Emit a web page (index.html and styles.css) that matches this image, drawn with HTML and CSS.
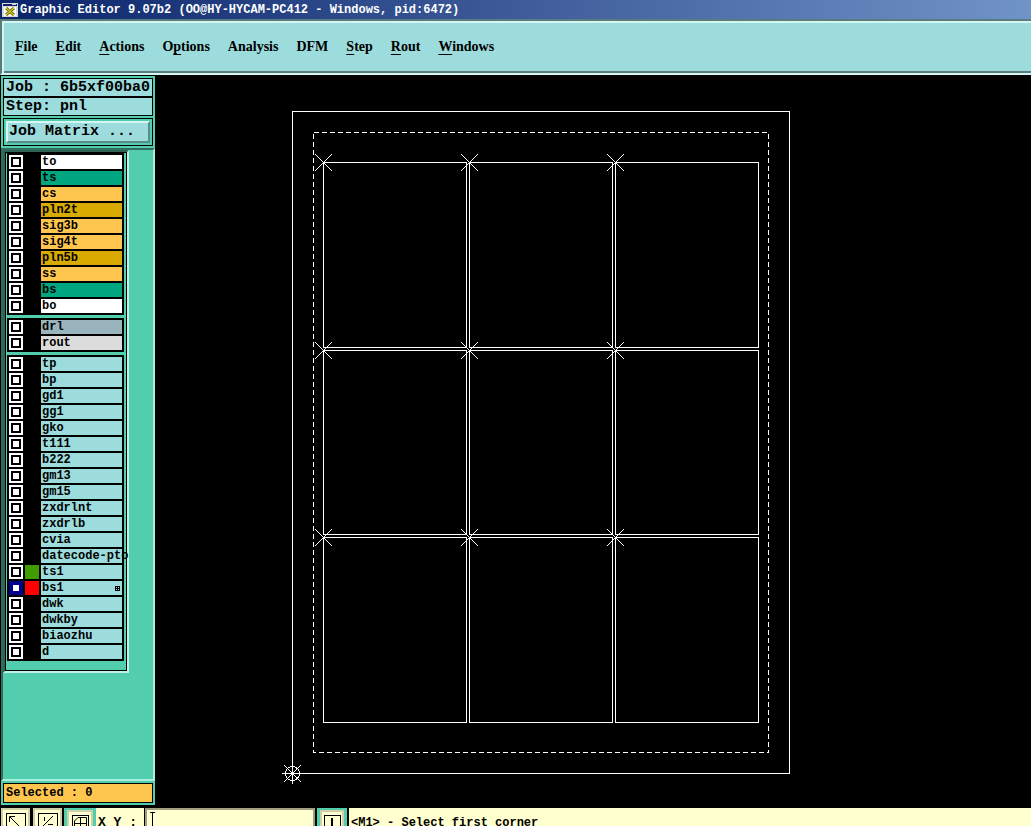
FILE: index.html
```
<!DOCTYPE html>
<html lang="en">
<head>
  <meta charset="UTF-8">
  <title>Graphic Editor 9.07b2</title>
  <link rel="stylesheet" href="styles.css">
</head>
<body>

<header class="titlebar">
  <svg class="app-icon" width="16" height="14" viewBox="0 0 16 14">
    <rect width="16" height="14" fill="#d8d8d8"/>
    <rect x="1" y="1" width="14" height="2" fill="#14206e"/>
    <rect x="10" y="1" width="4" height="1" fill="#d8d8d8"/>
    <rect x="2" y="4" width="12" height="9" fill="#fff"/>
    <path d="M4 5L12 12M12 5L4 12" stroke="#7c7c10" stroke-width="3"/>
    <path d="M4 5L12 12M12 5L4 12" stroke="#e6e020"/>
  </svg>
  <span>Graphic Editor 9.07b2 (OO@HY-HYCAM-PC412 - Windows, pid:6472)</span>
</header>

<nav class="menubar">
  <button><u>F</u>ile</button>
  <button><u>E</u>dit</button>
  <button><u>A</u>ctions</button>
  <button>O<u>p</u>tions</button>
  <button>Analysis</button>
  <button>DFM</button>
  <button><u>S</u>tep</button>
  <button><u>R</u>out</button>
  <button><u>W</u>indows</button>
</nav>

<main class="workspace">
  <aside class="sidebar">
    <div class="job">
      <div>Job : 6b5xf00ba0</div>
      <div>Step: pnl</div>
    </div>
    <div class="matrix"><button>Job Matrix ...</button></div>
    <div class="layers">
      <div class="frame" id="layers"></div>
    </div>
    <div class="selected">Selected : 0</div>
  </aside>

  <section class="canvas">
    <svg id="panel" width="876" height="732" viewBox="155 75 876 732" fill="none" stroke="#fff" shape-rendering="crispEdges">
      <rect x="292.5" y="111.5" width="497" height="662"/>
      <rect x="313.5" y="132.5" width="455" height="620" stroke-dasharray="5 3"/>
      <g id="steps"></g>
      <!-- datum -->
      <circle cx="292.5" cy="773.5" r="7"/>
      <path d="M282 773.5H303M292.5 764V784M284 765L301 782M301 765L284 782"/>
    </svg>
  </section>
</main>

<footer class="toolbar">
  <button class="tool" aria-label="Zoom area">
    <svg width="20" height="20" viewBox="0 0 20 20" fill="none" stroke="#000">
      <rect x=".5" y=".5" width="19" height="19"/>
      <path d="M4 4L16 16M3.5 9V3.5H9"/>
    </svg>
  </button>
  <button class="tool" aria-label="Snap">
    <svg width="20" height="20" viewBox="0 0 20 20" fill="none" stroke="#000">
      <rect x=".5" y=".5" width="19" height="19"/>
      <path d="M15 3L4 14M6.5 4V8M10 11.5H15"/>
    </svg>
  </button>
  <button class="tool on" aria-label="Grid">
    <svg width="17" height="20" viewBox="0 0 17 20" fill="none" stroke="#000">
      <rect x=".5" y=".5" width="16" height="19"/>
      <path d="M2.5 15V6L6 2.5H14.5V15M8.5 2V16M2 8.5H15"/>
    </svg>
  </button>
  <label class="xy" for="xy">X Y :</label>
  <div class="coords">
    <input id="xy" type="text">
    <svg class="caret" width="5" height="16" viewBox="0 0 5 16" fill="none" stroke="#000" shape-rendering="crispEdges">
      <path d="M0 .5H5M2.5 0V16"/>
    </svg>
  </div>
  <button class="tool on info" aria-label="Info">
    <svg width="17" height="20" viewBox="0 0 17 20" fill="none" stroke="#000">
      <rect x=".5" y=".5" width="16" height="19"/>
      <path d="M8 3V16" stroke-width="2"/>
    </svg>
  </button>
  <span class="status">&lt;M1&gt; - Select first corner</span>
</footer>

<script src="script.js"></script>
</body>
</html>
```
FILE: styles.css
```
* {
  box-sizing: border-box;
}
body {
  margin: 0;
  height: 100vh;
  display: flex;
  flex-direction: column;
  overflow: hidden;
  background: #000;
  color: #000;
  font: bold 12px/14px "Liberation Mono", monospace;
}
button, input {
  margin: 0;
  padding: 0;
  border: 0;
  border-radius: 0;
  background: none;
  font: inherit;
  color: inherit;
}
.titlebar {
  flex: none;
  height: 19px;
  display: flex;
  align-items: center;
  gap: 2px;
  padding-left: 2px;
  color: #fff;
  background: linear-gradient(to right, #0a246a, #7093c8);
}

/* menu */
.menubar {
  flex: none;
  height: 56px;
  display: flex;
  align-items: center;
  gap: 18px;
  padding: 0 13px;
  background: #9cdcdc;
  border: 2px solid #5a7c7c;
  border-right: 0;
  border-bottom-color: #d4f6f2;
  box-shadow: inset 2px 2px #d4f6f2, inset 0 -2px #5a7c7c;
  font: bold 14px/18px "Liberation Serif", serif;
}
.menubar u {
  text-underline-offset: 3px;
}

.workspace {
  flex: 1;
  min-height: 0;
  display: flex;
}

/* left column */
.sidebar {
  flex: none;
  width: 155px;
  display: flex;
  flex-direction: column;
  margin-bottom: 2px;
  border-left: 1px solid #000;
  border-top: 1px solid #000;
  background: #52ceae;
}
.job {
  margin: 2px 2px 0;
  border: 1px solid #000;
  background: #9cdcdc;
  font-size: 15px;
  line-height: 17px;
}
.job div {
  padding-left: 2px;
  white-space: nowrap;
}
.job div + div {
  border-top: 2px solid #000;
}
.matrix {
  margin: 2px 2px 0;
  padding: 2px;
  border: 1px solid #000;
}
.matrix button {
  display: block;
  width: 100%;
  height: 22px;
  padding-left: 1px;
  border: 2px solid #d4f6f2;
  border-right-color: #5a8c8c;
  border-bottom-color: #5a8c8c;
  background: #9cdcdc;
  font-size: 15px;
  text-align: left;
}
.layers {
  flex: 1;
  min-height: 0;
  margin-top: 2px;
  border: 2px solid #2f6f60;
  border-right-color: #a8eedc;
  border-bottom-color: #a8eedc;
}
.frame {
  width: 126px;
  padding: 1px 3px 10px 2px;
  border: 2px solid #2f6455;
  border-right-color: #c0f2e4;
  border-bottom-color: #c0f2e4;
  box-shadow: inset 0 0 0 1px #000;
}
.group {
  display: grid;
  gap: 2px;
  padding: 2px;
  background: #000;
}
.group + .group {
  margin-top: 3px;
}
.layer {
  display: grid;
  grid-template-columns: 14px 14px 81px;
  gap: 2px;
  height: 14px;
  white-space: nowrap;
}
.layer input {
  appearance: none;
  width: 14px;
  height: 14px;
  border: 2px solid #fff;
  background: #fff;
  box-shadow: inset 0 0 0 2px #000;
}
.layer input:checked {
  border-color: #00008c;
  box-shadow: inset 0 0 0 2px #00008c;
}
.layer label {
  position: relative;
  padding-left: 1px;
  background: #9cdcdc;
}
.layer .mark {
  position: absolute;
  right: 2px;
  top: 5px;
}
.layer .white { background: #fff; }
.layer .green { background: #00a67f; }
.layer .amber { background: #ffc64f; }
.layer .gold { background: #d9ab00; }
.layer .steel { background: #9ab4be; }
.layer .grey { background: #dcdcdc; }
.lime { background: #409c00; }
.red { background: #f00; }
.selected {
  margin: 2px;
  padding: 2px;
  border: 1px solid #000;
  background: #ffc64f;
}

.canvas {
  flex: 1;
  min-width: 0;
  overflow: hidden;
}
.canvas svg {
  display: block;
}

/* bottom bar, runs off the window */
.toolbar {
  flex: none;
  height: 19px;
  display: flex;
  align-items: flex-start;
  overflow: hidden;
  border-top: 1px solid #000;
  background: #ffffcf;
}
.tool {
  flex: none;
  display: flex;
  align-items: flex-start;
  justify-content: center;
  width: 32px;
  height: 32px;
  padding-top: 5px;
  border: solid #000;
  border-width: 0 2px 0 1px;
  background: #ffffcf;
  box-shadow: inset 2px 2px #cfcfa8, inset -2px 0 #cfcfa8;
}
.tool.on {
  border-color: #52ceae;
  border-width: 2px 3px 0;
}
.xy {
  padding: 8px 7px 0 2px;
  font-size: 13px;
}
.coords {
  position: relative;
  border: solid #000;
  border-width: 0 2px 0 1px;
}
.coords input {
  display: block;
  width: 170px;
  height: 32px;
  border: 2px solid #a0a080;
}
.caret {
  position: absolute;
  left: 5px;
  top: 4px;
}
.tool.info {
  width: 30px;
}
.status {
  flex: 1;
  height: 32px;
  padding: 8px 0 0 2px;
  border-left: 2px solid #000;
}
```
FILE: script.js
```
const groups = [
  [['to', 'white'], ['ts', 'green'], ['cs', 'amber'], ['pln2t', 'gold'], ['sig3b', 'amber'],
   ['sig4t', 'amber'], ['pln5b', 'gold'], ['ss', 'amber'], ['bs', 'green'], ['bo', 'white']],
  [['drl', 'steel'], ['rout', 'grey']],
  [['tp'], ['bp'], ['gd1'], ['gg1'], ['gko'], ['t111'], ['b222'], ['gm13'], ['gm15'],
   ['zxdrlnt'], ['zxdrlb'], ['cvia'], ['datecode-pto'], ['ts1', '', 'lime'], ['bs1', '', 'red'],
   ['dwk'], ['dwkby'], ['biaozhu'], ['d']]
];

const mark = '<svg class="mark" width="5" height="5" viewBox="0 0 5 5" fill="none" stroke="#000" shape-rendering="crispEdges"><path d="M.5 .5h4v4h-4zM2.5 0v5M0 2.5h5"/></svg>';

// layer list
document.getElementById('layers').innerHTML = groups.map(rows =>
  '<div class="group">' + rows.map(([name, color = '', swatch = '']) => `
    <div class="layer">
      <input type="checkbox" id="l-${name}" ${name === 'bs1' ? 'checked' : ''}>
      <span class="${swatch}"></span>
      <label class="${color}" for="l-${name}">${name}${name === 'bs1' ? mark : ''}</label>
    </div>`).join('') + '</div>').join('');

// 3 x 3 step and repeat
let out = '';
[[162, 185], [350, 184], [537, 185]].forEach(([y, h]) => {
  [323, 469, 615].forEach(x => {
    out += `<rect x="${x + 0.5}" y="${y + 0.5}" width="143" height="${h}"/>`;
    out += `<path d="M${x - 8} ${y - 8}l17 17M${x + 9} ${y - 8}l-17 17"/>`;
  });
});
document.getElementById('steps').innerHTML = out;
```
